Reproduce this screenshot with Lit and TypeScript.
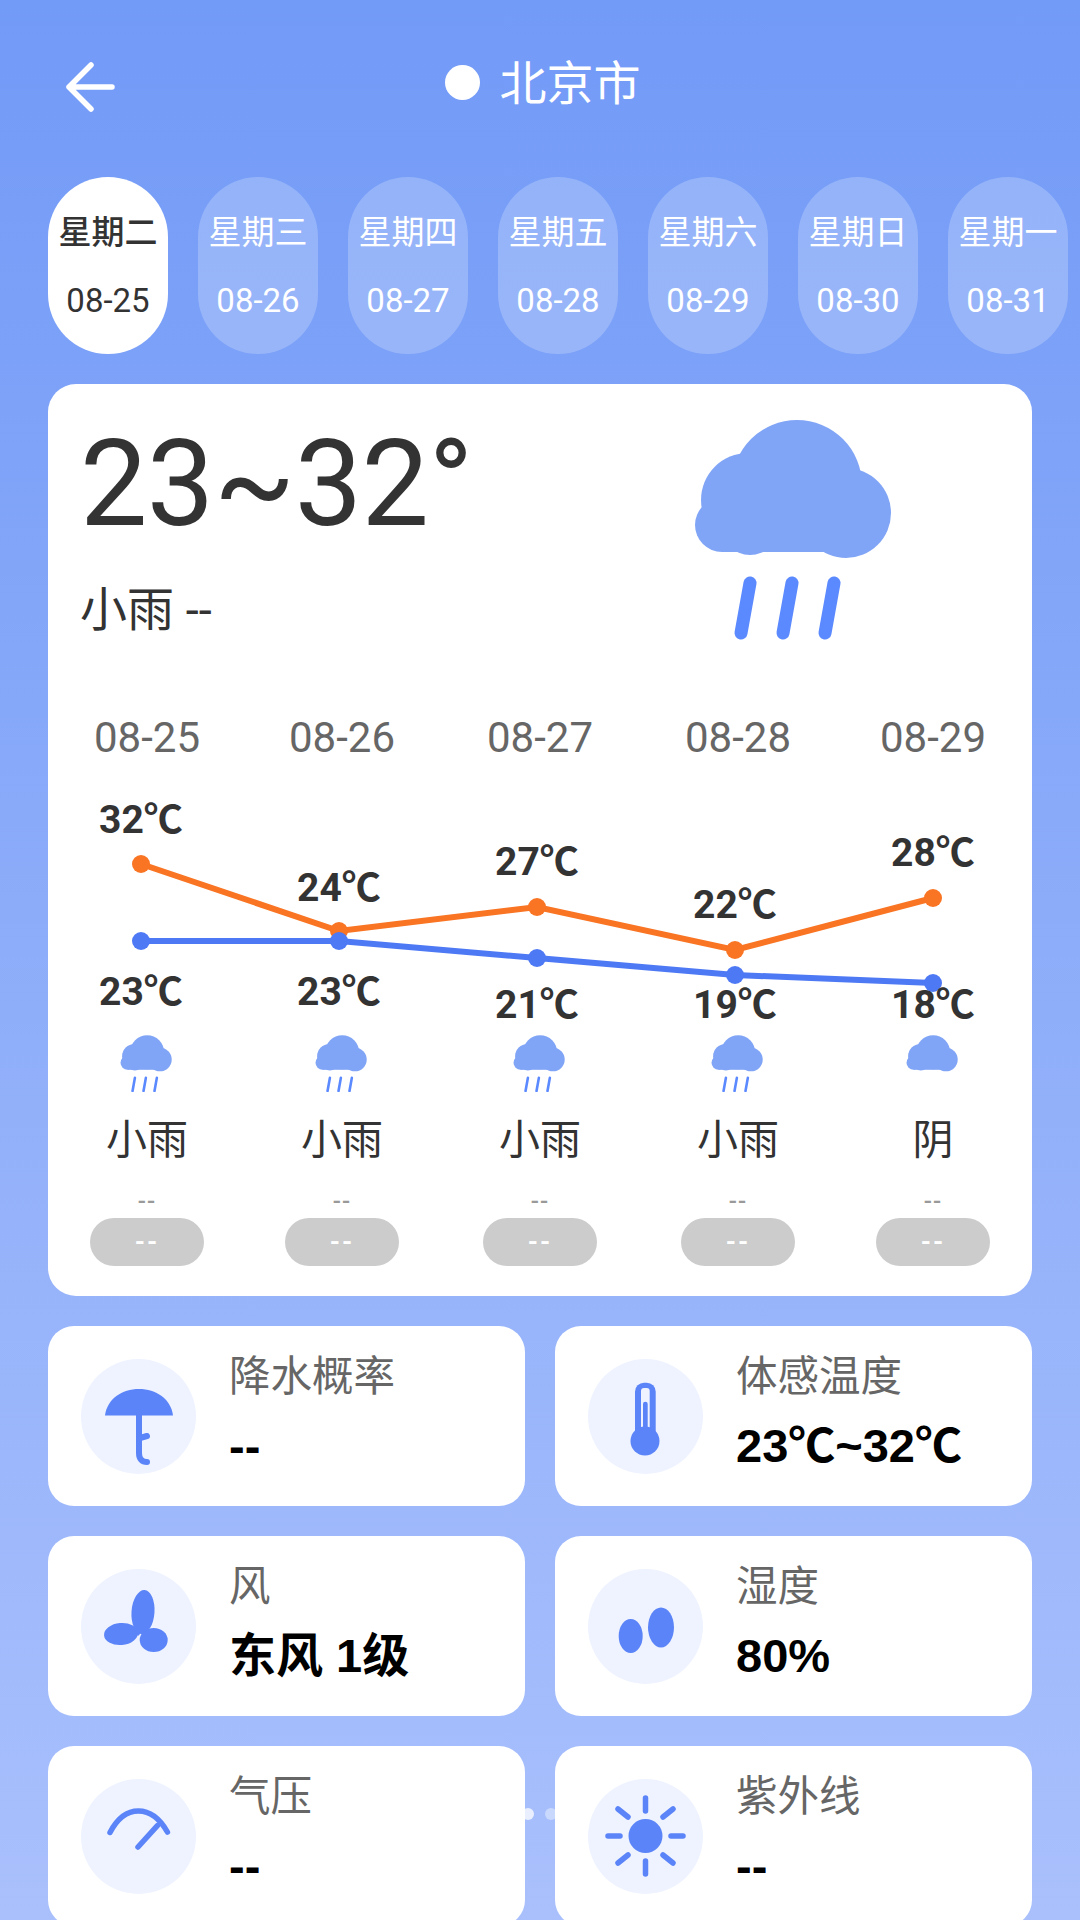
import { LitElement, html, css, svg } from "lit";
import { customElement } from "lit/decorators.js";

const DAYS = [
  ["星期二", "08-25"], ["星期三", "08-26"], ["星期四", "08-27"], ["星期五", "08-28"],
  ["星期六", "08-29"], ["星期日", "08-30"], ["星期一", "08-31"],
];
const XS = [141, 339, 537, 735, 933];
const HIGH = [
  { t: "32℃", y: 864, ly: 820 }, { t: "24℃", y: 931, ly: 888 }, { t: "27℃", y: 907, ly: 862 },
  { t: "22℃", y: 950, ly: 905 }, { t: "28℃", y: 898, ly: 853 },
];
const LOW = [
  { t: "23℃", y: 941, ly: 992 }, { t: "23℃", y: 941, ly: 992 }, { t: "21℃", y: 958, ly: 1005 },
  { t: "19℃", y: 975, ly: 1005 }, { t: "18℃", y: 983, ly: 1005 },
];
const FORE = [
  { d: "08-25", c: "小雨", rain: true }, { d: "08-26", c: "小雨", rain: true }, { d: "08-27", c: "小雨", rain: true },
  { d: "08-28", c: "小雨", rain: true }, { d: "08-29", c: "阴", rain: false },
];
const CH = 790;

const cloud = svg`<g fill="#81a5f6">
  <circle cx="137" cy="85" r="65"/><circle cx="88" cy="100" r="47"/><circle cx="62" cy="125" r="27"/>
  <circle cx="90" cy="126" r="29"/><circle cx="186" cy="113" r="45"/><circle cx="187" cy="125" r="32"/>
  <rect x="62" y="90" width="130" height="62"/></g>`;

function rainIcon(width: number, height: number, sw: number, rain: boolean) {
  return html`<svg width=${width} height=${height} viewBox="30 15 205 222">
    ${cloud}
    ${rain ? svg`<g stroke="#5b89ff" stroke-width=${sw} stroke-linecap="round">
      <line x1="90" y1="183" x2="81" y2="233"/><line x1="132" y1="183" x2="123" y2="233"/><line x1="174" y1="183" x2="165" y2="233"/></g>` : ""}
  </svg>`;
}

const ICONS = {
  umbrella: svg`<path d="M24 56.5C26 40 41 30 58 30S90 40 92 56.5Z" fill="#5b84f8"/>
    <path d="M58 56V94C58 100 61 103 66 103M59 79L66 77" fill="none" stroke="#5b84f8" stroke-width="6" stroke-linecap="round"/>`,
  thermo: svg`<rect x="47" y="23.7" width="20.7" height="60" rx="9" fill="#5b84f8"/>
    <rect x="53" y="29" width="8.7" height="45" rx="3" fill="#eef3ff"/>
    <rect x="55" y="42.7" width="4.7" height="40" rx="2.3" fill="#5b84f8"/>
    <circle cx="57" cy="82" r="14.5" fill="#5b84f8"/>`,
  wind: svg`<g fill="#5b84f8"><ellipse cx="62" cy="43" rx="11.5" ry="22" transform="rotate(4 62 43)"/>
    <ellipse cx="40" cy="65" rx="17" ry="11" transform="rotate(-5 40 65)"/>
    <ellipse cx="72.7" cy="71" rx="14" ry="12"/>
    <path d="M52 60L60 52L64 60L57 67Z"/></g>`,
  drops: svg`<g fill="#5b84f8"><ellipse cx="42.7" cy="67" rx="12" ry="17"/><ellipse cx="73" cy="58.4" rx="13" ry="20"/></g>`,
  gauge: svg`<g fill="none" stroke="#5b84f8" stroke-width="5.5" stroke-linecap="round">
    <path d="M29 53.5C36 40 46 32 57.4 32S79 40 86.4 53"/><line x1="76.4" y1="46.6" x2="57" y2="68"/></g>`,
  sun: svg`<circle cx="57.5" cy="57" r="17" fill="#5b84f8"/>
    <g stroke="#5b84f8" stroke-width="5.5" stroke-linecap="round">
    <line x1="57.5" y1="19" x2="57.5" y2="32"/><line x1="57.5" y1="82" x2="57.5" y2="95"/>
    <line x1="20" y1="57" x2="32" y2="57"/><line x1="83" y1="57" x2="95" y2="57"/>
    <line x1="30" y1="30" x2="40" y2="38"/><line x1="85" y1="30" x2="75" y2="38"/>
    <line x1="30" y1="84" x2="40" y2="76"/><line x1="85" y1="84" x2="75" y2="76"/></g>`,
};

const STATS: { icon: keyof typeof ICONS; l: string; v: string }[] = [
  { icon: "umbrella", l: "降水概率", v: "--" },
  { icon: "thermo", l: "体感温度", v: "23℃~32℃" },
  { icon: "wind", l: "风", v: "东风 1级" },
  { icon: "drops", l: "湿度", v: "80%" },
  { icon: "gauge", l: "气压", v: "--" },
  { icon: "sun", l: "紫外线", v: "--" },
];

@customElement("app-root")
export class AppRoot extends LitElement {
  static styles = css`
    :host {
      display: block; position: relative; width: 1080px; height: 1920px; overflow: hidden;
      background: linear-gradient(180deg, #729af7 0%, #a9c0fc 100%);
      font-family: Roboto, "Noto Sans CJK SC", sans-serif; color: #333;
    }
    .header { height: 177px; position: relative; display: flex; align-items: flex-start; justify-content: center; }
    .back { position: absolute; left: 62px; top: 60px; }
    .title { display: flex; align-items: center; gap: 20px; color: #fff; font-size: 47px; line-height: 60px; margin-top: 54px; margin-left: 5px; }
    .dot { width: 35px; height: 35px; border-radius: 50%; background: #fff; margin-top: -4px; }
    .days { display: flex; gap: 30px; padding-left: 48px; }
    .day {
      flex: none; width: 120px; height: 177px; border-radius: 60px; background: rgba(255,255,255,.22); color: #fff;
      display: flex; flex-direction: column; align-items: center; justify-content: center; gap: 24px;
    }
    .day.on { background: #fff; color: #333; }
    .day.on .wk { font-weight: 500; }
    .wk { font-size: 33px; line-height: 46px; white-space: nowrap; }
    .dd { font-size: 33px; line-height: 42px; }
    .main { margin: 30px 48px 0; height: 912px; background: #fff; border-radius: 28px; overflow: hidden; }
    .top { height: 329px; display: flex; justify-content: space-between; }
    .now { padding: 30px 0 0 32px; }
    .range { font-size: 120px; line-height: 140px; color: #333; letter-spacing: -0.6px; }
    .desc { font-size: 47px; line-height: 60px; margin-top: 26px; color: #333; }
    .big { margin: 16px 112px 0 0; display: block; }
    .dates, .fore { display: flex; padding: 0 42px; }
    .date { width: 114px; text-align: center; font-size: 42px; line-height: 50px; color: #666; white-space: nowrap; }
    .date + .date, .col + .col { margin-left: 84px; }
    .date:nth-child(2), .date:nth-child(5), .col:nth-child(2), .col:nth-child(5) { margin-left: 81px; }
    .chart { display: block; margin-top: 27px; }
    .lab { font-size: 39px; font-weight: 700; fill: #333; text-anchor: middle; dominant-baseline: central; }
    .col { width: 114px; display: flex; flex-direction: column; align-items: center; }
    .mini { height: 60px; margin-top: 4px; margin-right: 2px; }
    .mini svg { display: block; }
    .cond { font-size: 41px; line-height: 50px; margin-top: 21px; color: #333; }
    .dash { font-size: 24px; font-weight: 500; letter-spacing: 1px; line-height: 30px; margin-top: 21px; color: #999; }
    .tag { width: 114px; height: 48px; margin-top: 2px; border-radius: 24px; background: #ccc; color: #fff; font-size: 26px; font-weight: 700; letter-spacing: 2px; line-height: 48px; text-align: center; }
    .grid { display: grid; grid-template-columns: 477px 477px; gap: 30px; padding: 30px 48px 0; position: relative; }
    .card { height: 180px; background: #fff; border-radius: 26px; display: flex; align-items: center; gap: 33px; padding-left: 33px; position: relative; }
    .circle { width: 115px; height: 115px; border-radius: 50%; background: #eef3ff; flex: none; display: block; }
    .text { padding-bottom: 10px; }
    .lbl { font-size: 41.5px; line-height: 56px; color: #666; white-space: nowrap; }
    .val { font-family: "Liberation Sans", "Noto Sans CJK SC", sans-serif; font-size: 47px; line-height: 56px; margin-top: 13px; font-weight: 700; color: #000; white-space: nowrap; }
    .pager { position: absolute; left: 522px; top: 1808px; display: flex; gap: 11px; }
    .pager span { width: 12px; height: 12px; border-radius: 50%; background: rgba(255,255,255,.75); }
    .pager span + span { background: rgba(255,255,255,.4); }
  `;

  render() {
    const pts = (a: { y: number }[]) => a.map((p, i) => `${XS[i]},${p.y - CH}`).join(" ");
    return html`
      <div class="pager"><span></span><span></span></div>
      <div class="header">
        <svg class="back" width="60" height="56" viewBox="0 0 60 56" fill="none" stroke="#fff" stroke-width="5.5" stroke-linecap="round" stroke-linejoin="round">
          <path d="M29 5L7 27L29 49M7 27H50"/>
        </svg>
        <div class="title"><span class="dot"></span><span>北京市</span></div>
      </div>
      <div class="days">
        ${DAYS.map((d, i) => html`<div class="day ${i === 0 ? "on" : ""}"><div class="wk">${d[0]}</div><div class="dd">${d[1]}</div></div>`)}
      </div>
      <div class="main">
        <div class="top">
          <div class="now"><div class="range">23~32°</div><div class="desc">小雨 --</div></div>
          <div class="big">
            <svg width="260" height="260" viewBox="0 0 260 260">
              ${cloud}
              <g stroke="#5b89ff" stroke-width="13" stroke-linecap="round">
                <line x1="90" y1="183" x2="81" y2="233"/><line x1="132" y1="183" x2="123" y2="233"/><line x1="174" y1="183" x2="165" y2="233"/>
              </g>
            </svg>
          </div>
        </div>
        <div class="dates">${FORE.map((f) => html`<div class="date">${f.d}</div>`)}</div>
        <svg class="chart" width="984" height="240" viewBox="48 0 984 240">
          <polyline points=${pts(HIGH)} fill="none" stroke="#f97423" stroke-width="6"/>
          <polyline points=${pts(LOW)} fill="none" stroke="#4e79f5" stroke-width="6"/>
          ${HIGH.map((p, i) => svg`<circle cx=${XS[i]} cy=${p.y - CH} r="9" fill="#f97423"/>`)}
          ${LOW.map((p, i) => svg`<circle cx=${XS[i]} cy=${p.y - CH} r="9" fill="#4e79f5"/>`)}
          ${HIGH.map((p, i) => svg`<text class="lab" x=${XS[i]} y=${p.ly - CH}>${p.t}</text>`)}
          ${LOW.map((p, i) => svg`<text class="lab" x=${XS[i]} y=${p.ly - CH}>${p.t}</text>`)}
        </svg>
        <div class="fore">
          ${FORE.map((f) => html`<div class="col">
            <div class="mini">${rainIcon(54, 58, 10, f.rain)}</div>
            <div class="cond">${f.c}</div>
            <div class="dash">--</div>
            <div class="tag">--</div>
          </div>`)}
        </div>
      </div>
      <div class="grid">
        ${STATS.map((s) => html`<div class="card">
          <svg class="circle" viewBox="0 0 115 115">${ICONS[s.icon]}</svg>
          <div class="text"><div class="lbl">${s.l}</div><div class="val">${s.v}</div></div>
        </div>`)}
      </div>
    `;
  }
}
